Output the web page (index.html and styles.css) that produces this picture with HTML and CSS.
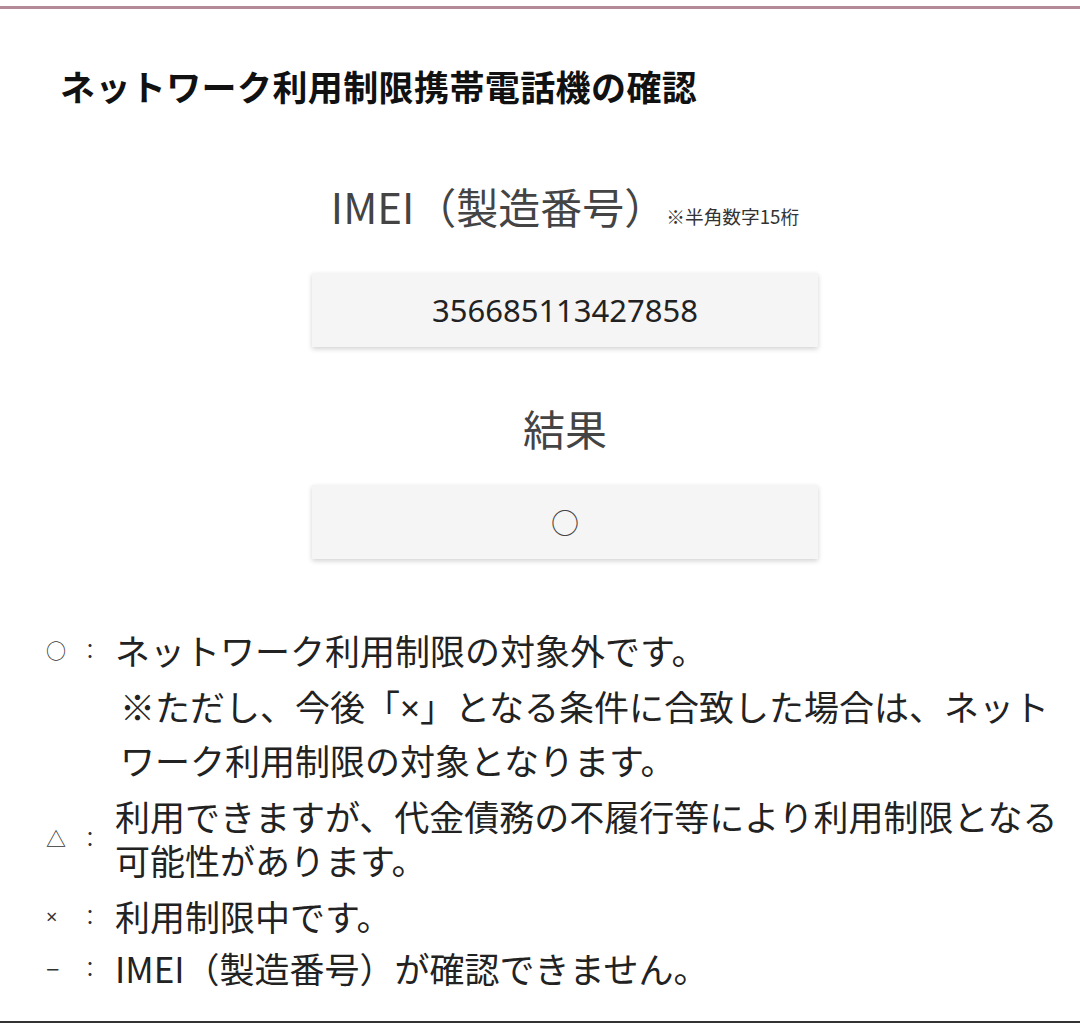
FILE: index.html
```html
<!DOCTYPE html>
<html lang="ja">
<head>
    <meta charset="UTF-8">
    <title>ネットワーク利用制限携帯電話機の確認</title>
    <link rel="stylesheet" href="styles.css">
</head>
<body>
    <div class="topline"></div>
    <h1 class="title">ネットワーク利用制限携帯電話機の確認</h1>

    <div class="checker">
        <div class="field-label">IMEI（製造番号）<span class="hint">※半角数字15桁</span></div>
        <div class="field-box imei">356685113427858</div>
        <div class="field-label">結果</div>
        <div class="field-box result">○</div>
    </div>

    <div class="legend">
        <div class="legend-row">
            <span class="mark"><span class="sym">○</span><span class="colon">：</span></span>
            <span class="desc">ネットワーク利用制限の対象外です。</span>
        </div>
        <div class="note">※ただし、今後「<span class="latin">×</span>」となる条件に合致した場合は、ネット<br>ワーク利用制限の対象となります。</div>
        <div class="legend-row">
            <span class="mark"><span class="sym">△</span><span class="colon">：</span></span>
            <span class="desc">利用できますが、代金債務の不履行等により利用制限となる<br>可能性があります。</span>
        </div>
        <div class="legend-row later">
            <span class="mark"><span class="sym latin">×</span><span class="colon">：</span></span>
            <span class="desc">利用制限中です。</span>
        </div>
        <div class="legend-row">
            <span class="mark"><span class="sym latin minus">−</span><span class="colon">：</span></span>
            <span class="desc">IMEI（製造番号）が確認できません。</span>
        </div>
    </div>
    <div class="bottomline"></div>
</body>
</html>
```

FILE: styles.css
```css
body {
    background: #fff;
    font-family: "Noto Sans CJK JP", "Noto Sans", sans-serif;
    color: #222;
    margin: 0;
    padding: 0;
    height: 1026px;
    overflow: hidden;
}
.topline {
    height: 3px;
    margin-top: 6px;
    background: #b48a98;
}
.title {
    font-size: 35px;
    font-weight: bold;
    color: #111;
    line-height: 44px;
    margin: 55px 0 0 60px;
    letter-spacing: 0.4px;
}
.checker {
    padding-left: 50px;
    display: flex;
    flex-direction: column;
    align-items: center;
}
.field-label {
    font-size: 42px;
    color: #444;
    line-height: 50px;
    margin-top: 73px;
    white-space: nowrap;
}
.field-label + .field-box {
    margin-top: 32px;
}
.checker .field-box + .field-label {
    margin-top: 56px;
}
.hint {
    font-size: 18.7px;
    color: #333;
}
.field-box {
    width: 506px;
    height: 74px;
    background: #f5f5f5;
    box-shadow: 0 2px 5px rgba(0, 0, 0, 0.18);
    display: flex;
    align-items: center;
    justify-content: center;
    color: #222;
}
.imei {
    font-size: 31px;
    font-family: "Noto Sans", sans-serif;
}
.result {
    font-size: 28px;
    color: #444;
}
.legend {
    margin-top: 69px;
    display: flex;
    flex-direction: column;
    gap: 8px;
}
.legend-row {
    display: flex;
    align-items: center;
}
.legend-row.later {
    margin-top: 4px;
}
.mark {
    width: 115px;
    box-sizing: border-box;
    padding-left: 46px;
    font-size: 20px;
    color: #333;
    display: flex;
    align-items: center;
}
.sym {
    width: 34px;
}
.minus {
    font-size: 24px;
}
.latin {
    font-family: "Noto Sans", sans-serif;
}
.desc {
    font-size: 35px;
    line-height: 44px;
    white-space: nowrap;
}
.note {
    font-size: 35px;
    line-height: 52px;
    padding-left: 120px;
    white-space: nowrap;
}
.bottomline {
    height: 2px;
    background: #333;
    margin-top: 31px;
}
```
